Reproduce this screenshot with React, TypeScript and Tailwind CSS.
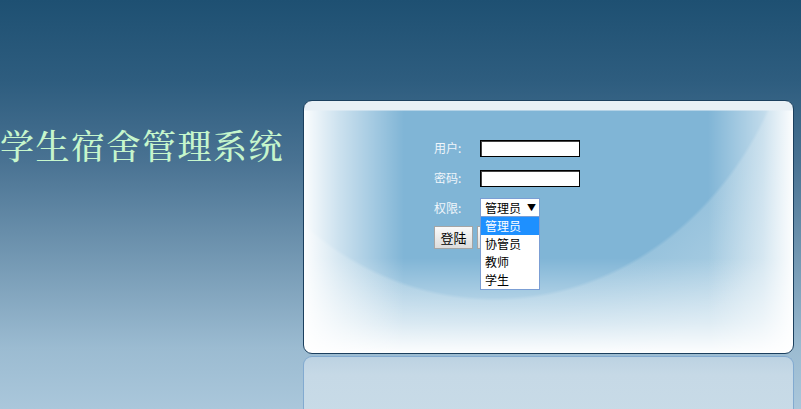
import { useState } from 'react'

const roles = ['管理员', '协管员', '教师', '学生']

export default function App() {
  const [role] = useState('管理员')

  return (
    <div className="h-[409px] w-[801px] overflow-hidden bg-[linear-gradient(to_bottom,#1e5072_0%,#2e5d7f_20%,#4a7393_40%,#7196b1_62%,#9bbbd1_85%,#aac7db_100%)] font-['Noto_Sans_CJK_SC',sans-serif]">
      <div className="flex">
        <div className="w-[303px] shrink-0 pt-[126px]">
          <h1 className="whitespace-nowrap text-[34px] leading-[38px] font-medium tracking-[1.5px] text-[#c6f6cc] font-['Noto_Serif_CJK_SC','Noto_Sans_CJK_SC',serif]">
            学生宿舍管理系统
          </h1>
        </div>

        <div className="flex w-[491px] shrink-0 flex-col pt-[100px]">
          {/* login panel */}
          <div className="h-[254px] rounded-[9px] border border-[#1b3f5e] bg-[linear-gradient(to_bottom,#e8f0f6_0,#e8f0f6_9px,rgba(255,255,255,0)_10px),linear-gradient(to_right,rgba(255,255,255,0.97)_0,rgba(255,255,255,0.6)_35px,rgba(255,255,255,0)_100px),linear-gradient(to_left,rgba(255,255,255,0.96)_0,rgba(255,255,255,0.5)_30px,rgba(255,255,255,0)_85px),linear-gradient(to_top,rgba(255,255,255,0.97)_0,rgba(255,255,255,0.6)_30px,rgba(255,255,255,0)_95px),radial-gradient(ellipse_310px_350px_at_190px_-150px,#80b5d6_0,#80b5d6_99%,#98c3dd_100%,#aed0e4_125%)]">
            <div className="pl-[130px] pt-[39px] text-[12px] text-[#f0f6fb]">
              <div className="flex h-[16px] items-center">
                <span className="w-[46px]">用户:</span>
                <input className="h-[17px] w-[100px] border border-black bg-white shadow-[inset_1px_1px_0_#444] outline-none" />
              </div>
              <div className="mt-[14px] flex h-[16px] items-center">
                <span className="w-[46px]">密码:</span>
                <input type="password" className="h-[17px] w-[100px] border border-black bg-white shadow-[inset_1px_1px_0_#444] outline-none" />
              </div>
              <div className="mt-[12px] flex h-[19px] items-center">
                <span className="w-[46px]">权限:</span>
                <div className="relative">
                  <div className="flex h-[19px] w-[60px] items-center border border-[#7b9ed4] bg-white pl-[4px] text-[12px] text-black">
                    <span>{role}</span>
                    <span className="ml-[6px] text-[9px]">▼</span>
                  </div>
                  {/* open option list */}
                  <ul className="absolute left-0 top-[18px] z-10 w-[60px] border border-[#7b9ed4] bg-white text-[12px] leading-[18px] text-black">
                    {roles.map((r) => (
                      <li
                        key={r}
                        className={r === role ? 'bg-[#1e90ff] pl-[4px] text-white' : 'pl-[4px]'}
                      >
                        {r}
                      </li>
                    ))}
                  </ul>
                </div>
              </div>
              <div className="mt-[9px] flex gap-[4px]">
                <button className="h-[23px] w-[39px] border border-[#a5a5a5] bg-[linear-gradient(to_bottom,#fafafa,#dcdcdc)] text-[13px] text-black">
                  登陆
                </button>
                <button aria-label="重置" className="h-[23px] w-[39px] border border-[#a5a5a5] bg-[linear-gradient(to_bottom,#fafafa,#dcdcdc)]" />
              </div>
            </div>
          </div>

          {/* reflection */}
          <div className="mt-[2px] h-[60px] rounded-t-[9px] border border-b-0 border-[#82aad0] bg-[linear-gradient(to_bottom,#bcd2e2,#c6d9e6_30%,#c8dbe7)]" />
        </div>
      </div>
    </div>
  )
}
